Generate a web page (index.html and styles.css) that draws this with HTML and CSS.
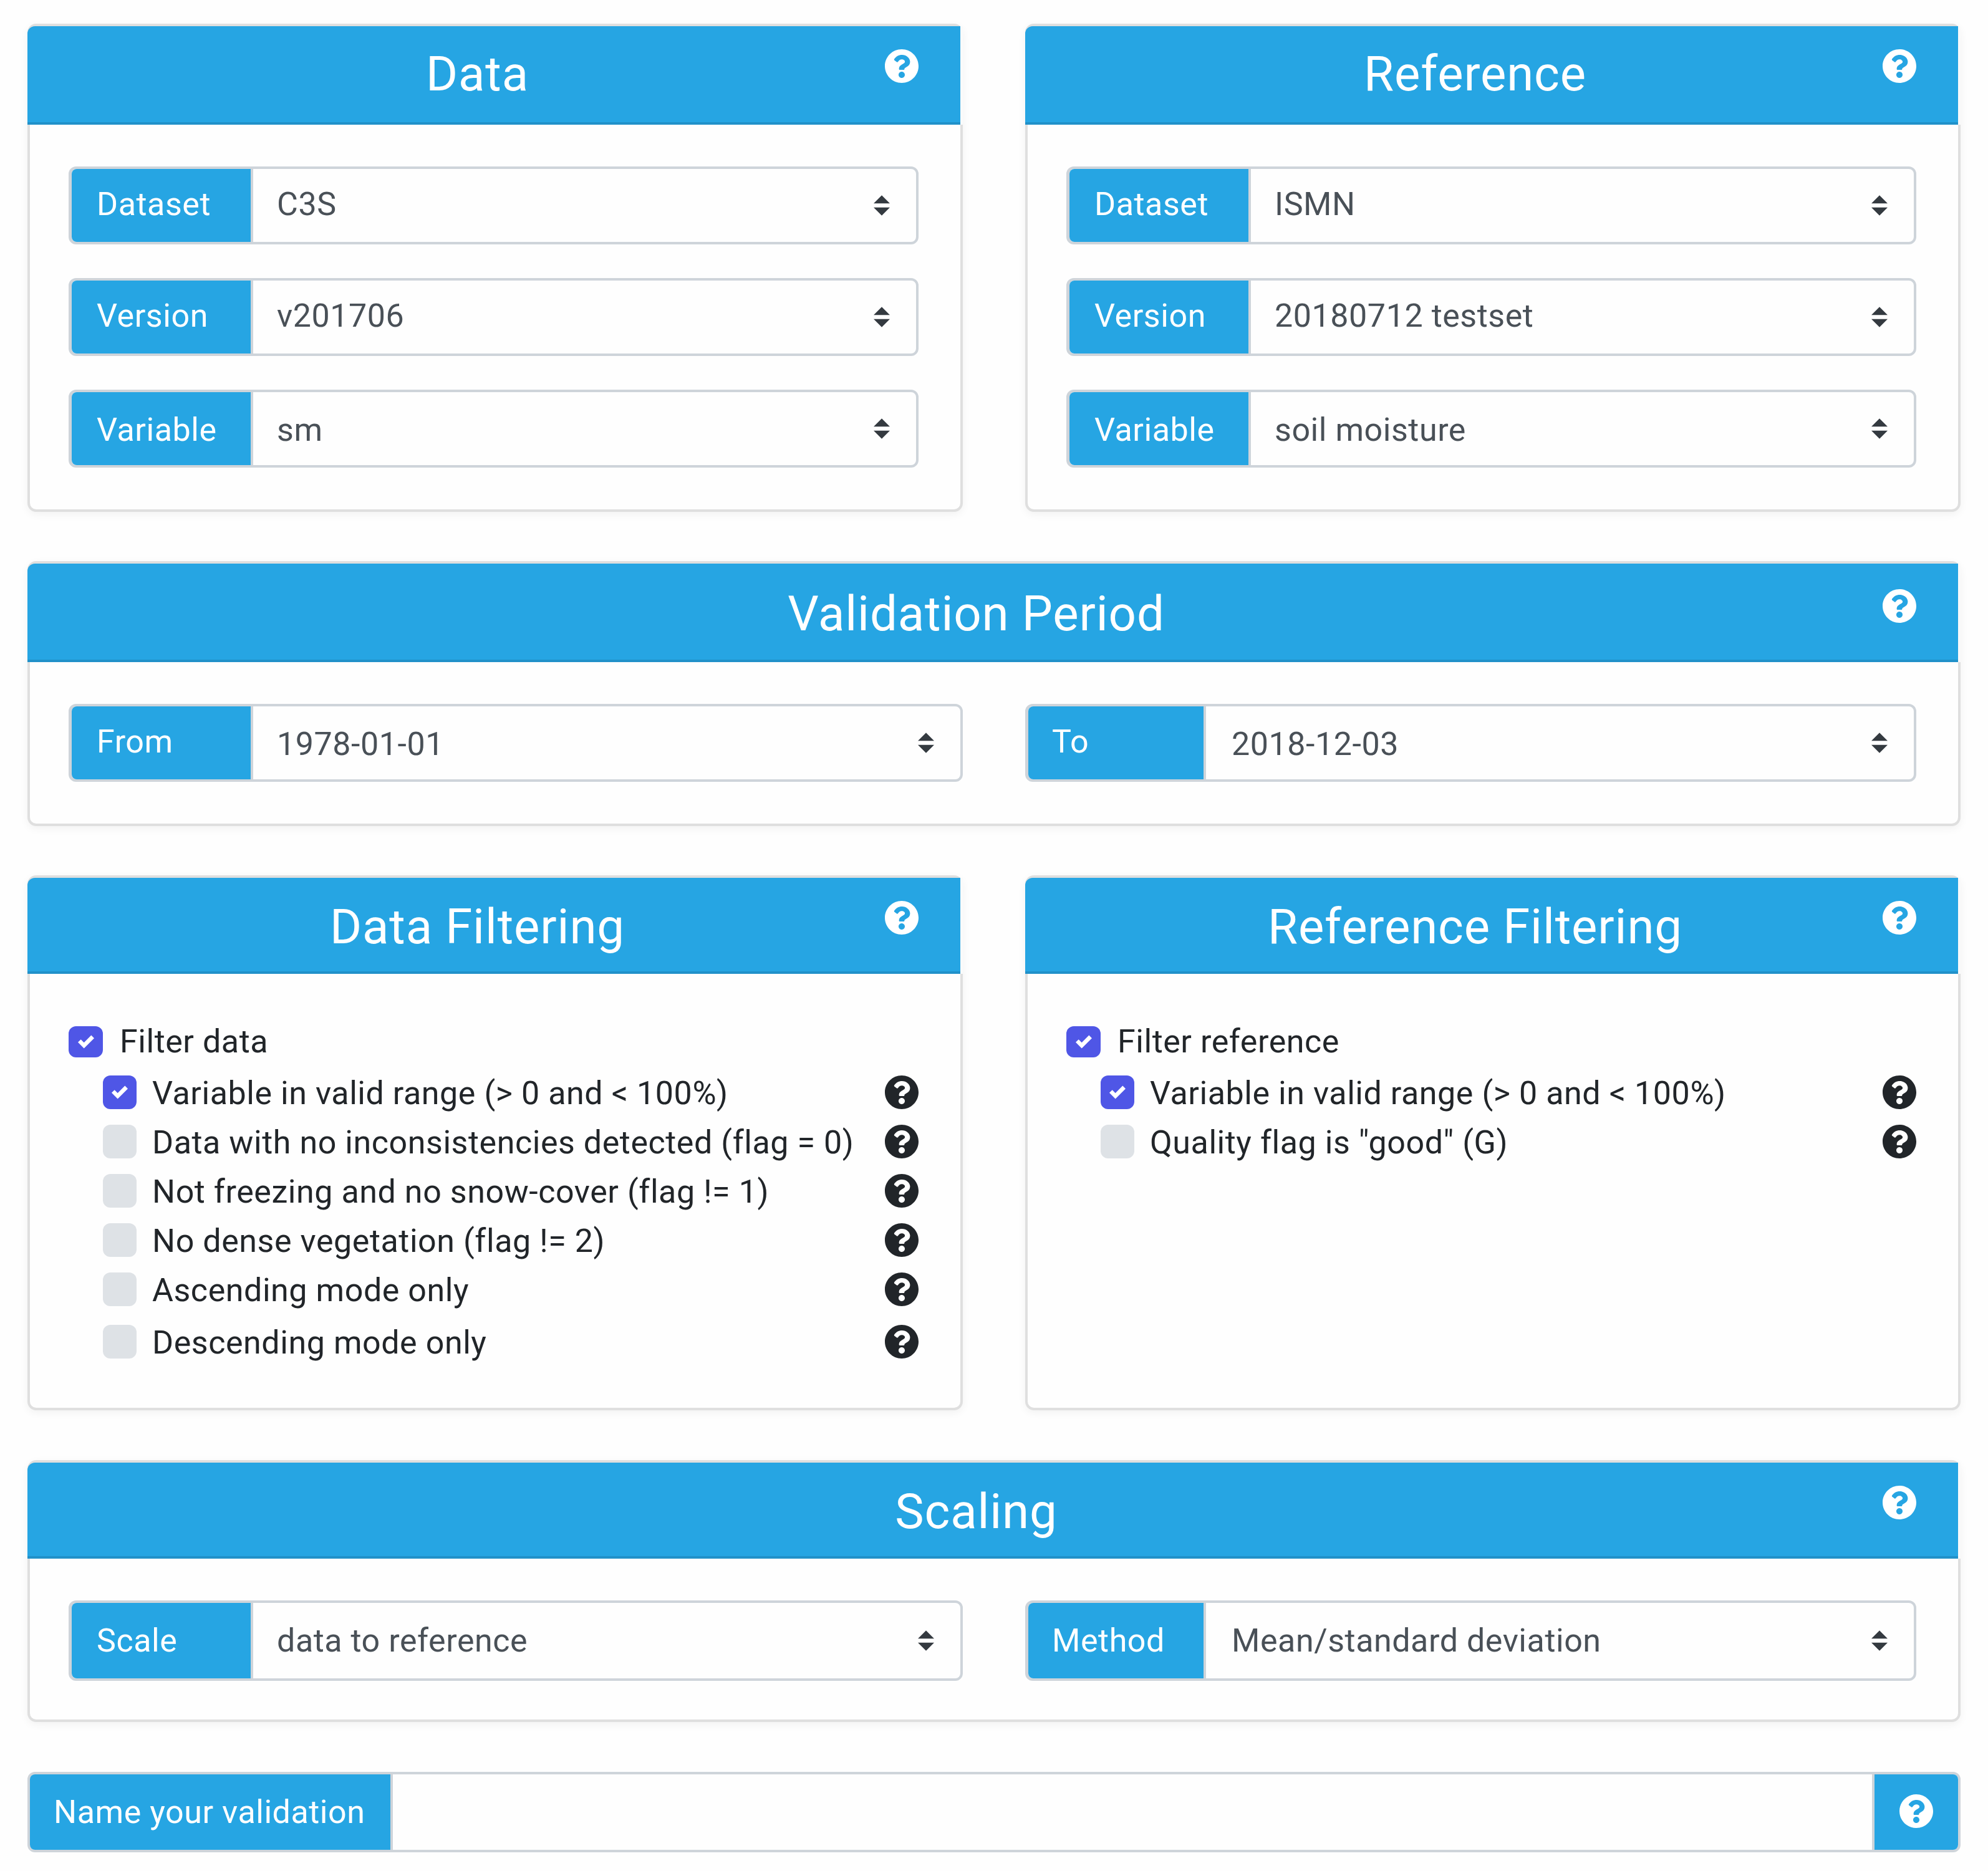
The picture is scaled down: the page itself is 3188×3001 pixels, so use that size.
FILE: index.html
```html
<!DOCTYPE html>
<html lang="en">
<head>
<meta charset="utf-8">
<title>Validation setup</title>
<link rel="stylesheet" href="styles.css">
</head>
<body>
<svg class="sprite" xmlns="http://www.w3.org/2000/svg">
  <symbol id="help" viewBox="8 8 496 496"><path d="M504 256c0 136.997-111.043 248-248 248S8 392.997 8 256C8 119.083 119.043 8 256 8s248 111.083 248 248zM262.655 90c-54.497 0-89.255 22.957-116.549 63.758-3.536 5.286-2.353 12.415 2.715 16.258l34.699 26.31c5.205 3.947 12.621 3.008 16.665-2.122 17.864-22.658 30.113-35.797 57.303-35.797 20.429 0 45.698 13.148 45.698 32.958 0 14.976-12.363 22.667-32.534 33.976C247.128 238.528 216 254.941 216 296v4c0 6.627 5.373 12 12 12h56c6.627 0 12-5.373 12-12v-1.333c0-28.462 83.186-29.647 83.186-106.667 0-58.002-60.165-102-116.531-102zM256 338c-25.365 0-46 20.635-46 46 0 25.364 20.635 46 46 46s46-20.636 46-46c0-25.365-20.635-46-46-46z"/></symbol>
  <symbol id="updown" viewBox="0 0 4 5"><path d="M2 0L0 2h4zm0 5L0 3h4z"/></symbol>
  <symbol id="tick" viewBox="0 0 8 8"><path d="M6.564.75l-3.59 3.612-1.538-1.55L0 4.26 2.974 7.25 8 2.193z"/></symbol>
</svg>
<main class="stack">
  <div class="pair">
    <section class="card">
      <header class="head"><h2 class="title">Data</h2><svg class="help help-light head-help"><use href="#help"/></svg></header>
      <div class="body fields">
        <div class="group"><span class="tag">Dataset</span><span class="value">C3S</span><svg class="arrows"><use href="#updown"/></svg></div>
        <div class="group"><span class="tag">Version</span><span class="value">v201706</span><svg class="arrows"><use href="#updown"/></svg></div>
        <div class="group"><span class="tag tag-low">Variable</span><span class="value value-low">sm</span><svg class="arrows"><use href="#updown"/></svg></div>
      </div>
    </section>
    <section class="card">
      <header class="head"><h2 class="title">Reference</h2><svg class="help help-light head-help"><use href="#help"/></svg></header>
      <div class="body fields">
        <div class="group"><span class="tag">Dataset</span><span class="value">ISMN</span><svg class="arrows"><use href="#updown"/></svg></div>
        <div class="group"><span class="tag">Version</span><span class="value">20180712 testset</span><svg class="arrows"><use href="#updown"/></svg></div>
        <div class="group"><span class="tag tag-low">Variable</span><span class="value value-low">soil moisture</span><svg class="arrows"><use href="#updown"/></svg></div>
      </div>
    </section>
  </div>

  <section class="card">
    <header class="head"><h2 class="title title-low">Validation Period</h2><svg class="help help-light head-help head-help-low"><use href="#help"/></svg></header>
    <div class="body split">
      <div class="group"><span class="tag">From</span><span class="value value-low">1978-01-01</span><svg class="arrows"><use href="#updown"/></svg></div>
      <div class="group"><span class="tag tag-short">To</span><span class="value value-low">2018-12-03</span><svg class="arrows"><use href="#updown"/></svg></div>
    </div>
  </section>

  <div class="pair">
    <section class="card">
      <header class="head head-short"><h2 class="title title-low">Data Filtering</h2><svg class="help help-light head-help"><use href="#help"/></svg></header>
      <div class="body filters">
        <label class="check master"><span class="box box-master on"><svg class="tick"><use href="#tick"/></svg></span><span class="text">Filter data</span></label>
        <div class="check sub"><span class="box on"><svg class="tick"><use href="#tick"/></svg></span><span class="text">Variable in valid range (&gt; 0 and &lt; 100%)</span><svg class="help"><use href="#help"/></svg></div>
        <div class="check sub"><span class="box"></span><span class="text">Data with no inconsistencies detected (flag = 0)</span><svg class="help"><use href="#help"/></svg></div>
        <div class="check sub"><span class="box"></span><span class="text">Not freezing and no snow-cover (flag != 1)</span><svg class="help"><use href="#help"/></svg></div>
        <div class="check sub"><span class="box"></span><span class="text">No dense vegetation (flag != 2)</span><svg class="help"><use href="#help"/></svg></div>
        <div class="check sub"><span class="box"></span><span class="text">Ascending mode only</span><svg class="help"><use href="#help"/></svg></div>
        <div class="check sub last"><span class="box"></span><span class="text">Descending mode only</span><svg class="help"><use href="#help"/></svg></div>
      </div>
    </section>
    <section class="card">
      <header class="head head-short"><h2 class="title title-low">Reference Filtering</h2><svg class="help help-light head-help"><use href="#help"/></svg></header>
      <div class="body filters">
        <label class="check master"><span class="box box-master on"><svg class="tick"><use href="#tick"/></svg></span><span class="text">Filter reference</span></label>
        <div class="check sub"><span class="box on"><svg class="tick"><use href="#tick"/></svg></span><span class="text">Variable in valid range (&gt; 0 and &lt; 100%)</span><svg class="help"><use href="#help"/></svg></div>
        <div class="check sub"><span class="box"></span><span class="text">Quality flag is "good" (G)</span><svg class="help"><use href="#help"/></svg></div>
      </div>
    </section>
  </div>

  <section class="card spaced">
    <header class="head head-short"><h2 class="title title-low">Scaling</h2><svg class="help help-light head-help"><use href="#help"/></svg></header>
    <div class="body split body-tight">
      <div class="group group-tall"><span class="tag tag-mid">Scale</span><span class="value value-mid">data to reference</span><svg class="arrows"><use href="#updown"/></svg></div>
      <div class="group group-tall"><span class="tag tag-short tag-mid">Method</span><span class="value value-mid">Mean/standard deviation</span><svg class="arrows"><use href="#updown"/></svg></div>
    </div>
  </section>

  <div class="group group-tall name spaced">
    <span class="tag tag-name">Name your validation</span>
    <span class="name-input"></span>
    <span class="name-help"><svg class="help help-light"><use href="#help"/></svg></span>
  </div>
</main>
</body>
</html>
```

FILE: styles.css
```css
* { box-sizing: border-box; }

html, body { margin: 0; background: #fefefe; }

body {
  width: 3188px;
  font-family: Roboto, "Liberation Sans", sans-serif;
  font-size: 52px;
  letter-spacing: .55px;
  color: #212529;
}

.sprite { display: none; }

.stack {
  display: flex;
  flex-direction: column;
  gap: 79px;
  padding: 38px 44px 30px;
}

.spaced { margin-top: 1px; }

.pair {
  display: grid;
  grid-template-columns: 1500px 1500px;
  gap: 100px;
}

.card {
  background: #fefefe;
  border: 4px solid #dfdfdf;
  border-radius: 14px;
  box-shadow: 0 4px 14px rgba(0, 0, 0, .05);
}

.head {
  display: flex;
  height: 158px;
  margin: 0 -4px 0 -4px;
  padding: 0 67px 4px 68px;
  background: #26a5e3;
  background-clip: padding-box;
  border-right: 4px solid #fafafa;
  border-radius: 12px 0 0 0;
  box-shadow: inset 0 -4px 0 #2191c9;
  color: #fff;
}

.head-short { height: 154px; }

.title {
  flex: 1;
  margin: 0;
  align-self: center;
  text-align: center;
  font-size: 78px;
  font-weight: 400;
  letter-spacing: .85px;
  line-height: 90px;
}

.title-low { margin-top: 8px; }

.help {
  flex: none;
  width: 54px;
  height: 54px;
  fill: #212529;
}

.help-light { fill: #fff; }

.head-help { margin-top: 37px; }
.head-help-low { margin-top: 41px; }

.body { padding: 67px 67px 67px 62px; }
.body-tight { padding-bottom: 62px; }

.fields {
  display: flex;
  flex-direction: column;
  gap: 54px;
}

.split {
  display: grid;
  grid-template-columns: 1434px 1429px;
  gap: 100px;
}

.group {
  display: flex;
  align-items: center;
  height: 125px;
  background: #fefefe;
  border: 4px solid #ced4da;
  border-left-width: 5px;
  border-radius: 12px;
}

.group-tall { height: 129px; }

.tag {
  flex: none;
  align-self: stretch;
  display: flex;
  align-items: center;
  width: 291px;
  padding: 0 0 5px 40px;
  background: #26a5e3;
  border-right: 4px solid #ced4da;
  border-radius: 8px 0 0 8px;
  color: #fff;
}

.tag-low { padding-bottom: 0; padding-top: 3px; }
.tag-mid { padding-bottom: 1px; }
.tag-short { width: 285px; padding-left: 38px; }
.tag-short + .value { padding-left: 41px; }

.value {
  flex: 1;
  padding: 0 0 5px 38px;
  color: #495057;
}

.value-low { padding-bottom: 0; padding-top: 3px; }
.value-mid { padding-bottom: 1px; }

.arrows {
  flex: none;
  width: 26px;
  height: 33px;
  margin-right: 42px;
  fill: #343a40;
}

.filters {
  display: flex;
  flex-direction: column;
  gap: 1px;
  padding-top: 70px;
}

.check {
  display: flex;
  align-items: center;
  height: 78px;
}

.master { margin-bottom: 2px; }
.master .text { padding-top: 0; padding-bottom: 2px; margin-left: 27px; }
.sub { padding-left: 55px; }
.last { margin-top: 5px; }

.box {
  flex: none;
  display: flex;
  align-items: center;
  justify-content: center;
  width: 54px;
  height: 54px;
  background: #dee2e6;
  border-radius: 12px;
}

.box-master { width: 55px; height: 50px; }

.box.on { background: #4f56e6; }

.tick {
  width: 26px;
  height: 26px;
  fill: #fff;
}

.text {
  flex: 1;
  margin-left: 25px;
  padding-top: 3px;
  white-space: nowrap;
}

.name { width: 3100px; border-left-width: 4px; }

.tag-name { width: 582px; padding-left: 38px; padding-bottom: 0; }

.name-input {
  flex: 1;
  align-self: stretch;
}

.name-help {
  flex: none;
  align-self: stretch;
  display: flex;
  align-items: center;
  justify-content: center;
  width: 138px;
  padding-bottom: 4px;
  background: #26a5e3;
  border-left: 4px solid #ced4da;
  border-radius: 0 8px 8px 0;
}
```
